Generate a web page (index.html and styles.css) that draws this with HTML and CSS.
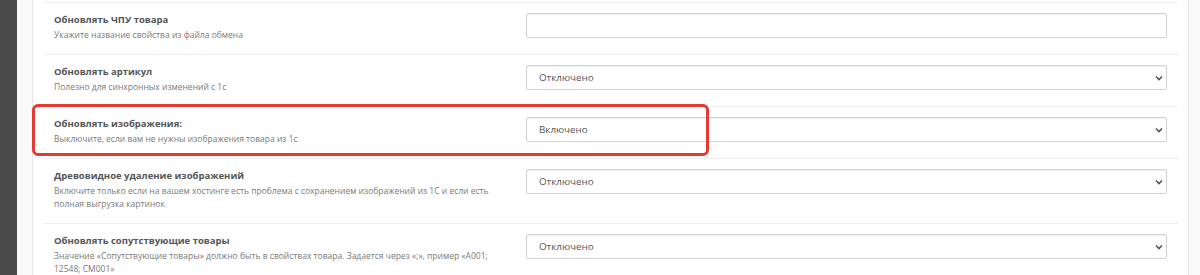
FILE: index.html
```html
<!DOCTYPE html>
<html lang="ru">
<head>
  <meta charset="UTF-8" />
  <title>Настройки обмена</title>
  <link rel="stylesheet" href="styles.css">
</head>
<body>
  <div class="sidebar"></div>

  <div class="main">
    <div class="card">
      <div class="row">
        <div class="label">
          <p class="title">Обновлять ЧПУ товара</p>
          <p class="desc">Укажите название свойства из файла обмена</p>
        </div>
        <div class="field">
          <input type="text" class="control">
        </div>
      </div>

      <div class="row">
        <div class="label">
          <p class="title">Обновлять артикул</p>
          <p class="desc">Полезно для синхронных изменений с 1с</p>
        </div>
        <div class="field">
          <div class="select-wrap">
            <select class="control">
              <option>Отключено</option>
              <option>Включено</option>
            </select>
            <svg class="chevron" width="8" height="6" viewBox="0 0 8 6"><path d="M1 1.5 L4 4.5 L7 1.5" fill="none" stroke="#555" stroke-width="1.6"/></svg>
          </div>
        </div>
      </div>

      <div class="row highlighted">
        <div class="label">
          <p class="title">Обновлять изображения:</p>
          <p class="desc">Выключите, если вам не нужны изображения товара из 1с</p>
        </div>
        <div class="field">
          <div class="select-wrap">
            <select class="control">
              <option>Включено</option>
              <option>Отключено</option>
            </select>
            <svg class="chevron" width="8" height="6" viewBox="0 0 8 6"><path d="M1 1.5 L4 4.5 L7 1.5" fill="none" stroke="#555" stroke-width="1.6"/></svg>
          </div>
        </div>
        <div class="mark"></div>
      </div>

      <div class="row">
        <div class="label">
          <p class="title">Древовидное удаление изображений</p>
          <p class="desc">Включите только если на вашем хостинге есть проблема с сохранением изображений из 1С и если есть полная выгрузка картинок</p>
        </div>
        <div class="field">
          <div class="select-wrap">
            <select class="control">
              <option>Отключено</option>
              <option>Включено</option>
            </select>
            <svg class="chevron" width="8" height="6" viewBox="0 0 8 6"><path d="M1 1.5 L4 4.5 L7 1.5" fill="none" stroke="#555" stroke-width="1.6"/></svg>
          </div>
        </div>
      </div>

      <div class="row">
        <div class="label">
          <p class="title">Обновлять сопутствующие товары</p>
          <p class="desc">Значение «Сопутствующие товары» должно быть в свойствах товара. Задается через «;», пример «A001; 12548; CM001»</p>
        </div>
        <div class="field">
          <div class="select-wrap">
            <select class="control">
              <option>Отключено</option>
              <option>Включено</option>
            </select>
            <svg class="chevron" width="8" height="6" viewBox="0 0 8 6"><path d="M1 1.5 L4 4.5 L7 1.5" fill="none" stroke="#555" stroke-width="1.6"/></svg>
          </div>
        </div>
      </div>
    </div>
  </div>
</body>
</html>
```

FILE: styles.css
```css
body {
  margin: 0;
  display: flex;
  height: 275px;
  overflow: hidden;
  font-family: "Open Sans", Arial, sans-serif;
  background: #fafafa;
}

.sidebar {
  width: 17px;
  background: #4a4a4a;
  flex-shrink: 0;
}

.main {
  flex: 1;
  padding: 0 11px 0 15px;
  background: #f9f9f9;
}

.card {
  background: white;
  border-left: 1px solid #e7e7e7;
  border-right: 1px solid #e7e7e7;
  padding: 2px 10px 0 10px;
  height: 100%;
  box-sizing: border-box;
}

.row {
  display: flex;
  border-top: 1px solid #efefef;
  position: relative;
}

.label {
  width: 472px;
  padding: 9px 11px 13px 11px;
  box-sizing: border-box;
  flex-shrink: 0;
}

.title {
  margin: 0;
  font-size: 9.5px;
  line-height: 16px;
  font-weight: bold;
  color: #555;
}

.desc {
  margin: 0;
  font-size: 8.5px;
  line-height: 13px;
  color: #7a7a7a;
}

.field {
  flex: 1;
  padding: 10px 11px 0 11px;
}

.control {
  display: block;
  width: 100%;
  height: 25px;
  box-sizing: border-box;
  border: 1px solid #d2d2d2;
  border-radius: 2px;
  box-shadow: inset 0 1px 1px rgba(0, 0, 0, 0.06);
  background: white;
  font-family: "Open Sans", Arial, sans-serif;
  font-size: 9.8px;
  color: #555;
  padding: 0 12px;
  outline: none;
}

select.control {
  appearance: none;
  -webkit-appearance: none;
}

.select-wrap {
  position: relative;
}

.chevron {
  position: absolute;
  right: 4px;
  top: 10px;
  pointer-events: none;
}

.mark {
  position: absolute;
  left: -11px;
  top: -3px;
  width: 677px;
  height: 52px;
  border: 3px solid #e53a33;
  border-radius: 6px;
  box-sizing: border-box;
  pointer-events: none;
}
```
